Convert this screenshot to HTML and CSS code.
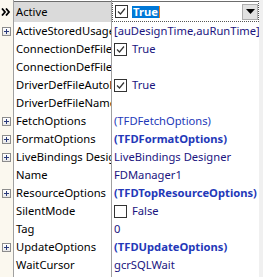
FILE: index.html
```html
<!DOCTYPE html>
<html lang="en">
<head>
  <meta charset="UTF-8">
  <title>Object Inspector</title>
  <link rel="stylesheet" href="styles.css">
</head>
<body>
  <div class="inspector">
    <div class="grid">

      <div class="row selected">
        <div class="gutter">
          <svg width="10" height="8" viewBox="0 0 10 8"><path d="M1 0.5 L4 4 L1 7.5 M5 0.5 L8 4 L5 7.5" fill="none" stroke="#000" stroke-width="1.8"/></svg>
        </div>
        <div class="name">Active</div>
        <div class="value edit">
          <span class="check on"><svg width="11" height="11" viewBox="0 0 11 11"><path d="M2 5.5 L4.5 8 L9 2.5" fill="none" stroke="#333" stroke-width="1.2"/></svg></span>
          <span class="sel">True</span><span class="caret"></span>
          <span class="drop"><svg width="9" height="5" viewBox="0 0 9 5"><path d="M0 0 H9 L4.5 5 Z" fill="#000"/></svg></span>
        </div>
      </div>

      <div class="row">
        <div class="gutter"><span class="plus"></span></div>
        <div class="name">ActiveStoredUsage</div>
        <div class="value">[auDesignTime,auRunTime]</div>
      </div>

      <div class="row">
        <div class="gutter"></div>
        <div class="name">ConnectionDefFileAutoLoad</div>
        <div class="value"><span class="check on"><svg width="11" height="11" viewBox="0 0 11 11"><path d="M2 5.5 L4.5 8 L9 2.5" fill="none" stroke="#333" stroke-width="1.2"/></svg></span>True</div>
      </div>

      <div class="row">
        <div class="gutter"></div>
        <div class="name">ConnectionDefFileName</div>
        <div class="value"></div>
      </div>

      <div class="row">
        <div class="gutter"></div>
        <div class="name">DriverDefFileAutoLoad</div>
        <div class="value"><span class="check on"><svg width="11" height="11" viewBox="0 0 11 11"><path d="M2 5.5 L4.5 8 L9 2.5" fill="none" stroke="#333" stroke-width="1.2"/></svg></span>True</div>
      </div>

      <div class="row">
        <div class="gutter"></div>
        <div class="name">DriverDefFileName</div>
        <div class="value"></div>
      </div>

      <div class="row">
        <div class="gutter"><span class="plus"></span></div>
        <div class="name">FetchOptions</div>
        <div class="value sub">(TFDFetchOptions)</div>
      </div>

      <div class="row">
        <div class="gutter"><span class="plus"></span></div>
        <div class="name">FormatOptions</div>
        <div class="value sub bold">(TFDFormatOptions)</div>
      </div>

      <div class="row">
        <div class="gutter"><span class="plus"></span></div>
        <div class="name">LiveBindings Designer</div>
        <div class="value">LiveBindings Designer</div>
      </div>

      <div class="row">
        <div class="gutter"></div>
        <div class="name">Name</div>
        <div class="value">FDManager1</div>
      </div>

      <div class="row">
        <div class="gutter"><span class="plus"></span></div>
        <div class="name">ResourceOptions</div>
        <div class="value sub bold">(TFDTopResourceOptions)</div>
      </div>

      <div class="row">
        <div class="gutter"></div>
        <div class="name">SilentMode</div>
        <div class="value"><span class="check"></span>False</div>
      </div>

      <div class="row">
        <div class="gutter"></div>
        <div class="name">Tag</div>
        <div class="value">0</div>
      </div>

      <div class="row">
        <div class="gutter"><span class="plus"></span></div>
        <div class="name">UpdateOptions</div>
        <div class="value sub bold">(TFDUpdateOptions)</div>
      </div>

      <div class="row">
        <div class="gutter"></div>
        <div class="name">WaitCursor</div>
        <div class="value">gcrSQLWait</div>
      </div>

    </div>
    <div class="scroll"></div>
  </div>
</body>
</html>
```

FILE: styles.css
```css
* {
  margin: 0;
  padding: 0;
  box-sizing: border-box;
}

:root {
  --gutter-bg: #fbf8ef;
  --line: #a0a0a0;
  --value: #1a1480;
  --sub: #2338b8;
  --sel-row: #dadada;
}

body {
  font-family: 'Noto Sans', sans-serif;
  font-size: 11.2px;
  background: #fff;
  color: #000;
}

.inspector {
  display: flex;
  width: 263px;
  height: 277px;
  overflow: hidden;
}

/* columns: gutter | name | value, lines drawn by the background */
.grid {
  flex: 1;
  display: flex;
  flex-direction: column;
  padding-top: 1px;
  background: linear-gradient(to right,
    var(--gutter-bg) 0 13px,
    var(--line) 13px 14px,
    #fff 14px 111px,
    var(--line) 111px 112px,
    #fff 112px);
}

.scroll {
  width: 4px;
  background: #f0f0f0;
}

.row {
  display: grid;
  grid-template-columns: 14px 98px 147px;
  height: 18px;
  line-height: 18px;
  flex-shrink: 0;
}

.gutter {
  display: flex;
  align-items: center;
  padding-left: 2px;
}

.name {
  padding-left: 2px;
  white-space: nowrap;
  overflow: hidden;
  margin-right: 1px;
}

.value {
  display: flex;
  align-items: center;
  padding-left: 2px;
  white-space: nowrap;
  overflow: hidden;
  color: var(--value);
}

.value.sub {
  color: var(--sub);
}

.bold {
  font-weight: 700;
}

/* selected row */
.row.selected {
  height: 21px;
  line-height: 20px;
}

.selected .gutter {
  padding-left: 1px;
  padding-top: 1px;
}

.selected .name {
  background: var(--sel-row);
  border-top: 1px solid #6d6d6d;
}

.selected .value {
  border-top: 1px solid #6d6d6d;
  border-left: 1px dotted #555;
  border-right: 1px dotted #555;
  border-bottom: 1px dotted #555;
  box-shadow: inset 0 1px 0 0 #fff;
  padding-left: 2px;
}

.check {
  width: 13px;
  height: 13px;
  border: 1px solid #333;
  background: #fff;
  margin-right: 5px;
  flex-shrink: 0;
  display: flex;
  align-items: center;
  justify-content: center;
}

.sel {
  background: #0078d7;
  color: #fff;
  font-weight: 700;
  line-height: 12px;
  padding: 0 1px 0 1px;
  margin-left: -1px;
}

.caret {
  width: 1px;
  height: 12px;
  background: #f08020;
}

.drop {
  margin-left: auto;
  width: 16px;
  height: 16px;
  background: #e1e1e1;
  border: 1px solid #adadad;
  display: flex;
  align-items: center;
  justify-content: center;
}

.plus {
  width: 9px;
  height: 9px;
  border: 1px solid #8c8c8c;
  background: linear-gradient(#fff, #e8e8e8);
  position: relative;
}

.plus::before,
.plus::after {
  content: '';
  position: absolute;
  background: #2a3a7a;
}

.plus::before {
  left: 1px;
  top: 3px;
  width: 5px;
  height: 1px;
}

.plus::after {
  left: 3px;
  top: 1px;
  width: 1px;
  height: 5px;
}
```
